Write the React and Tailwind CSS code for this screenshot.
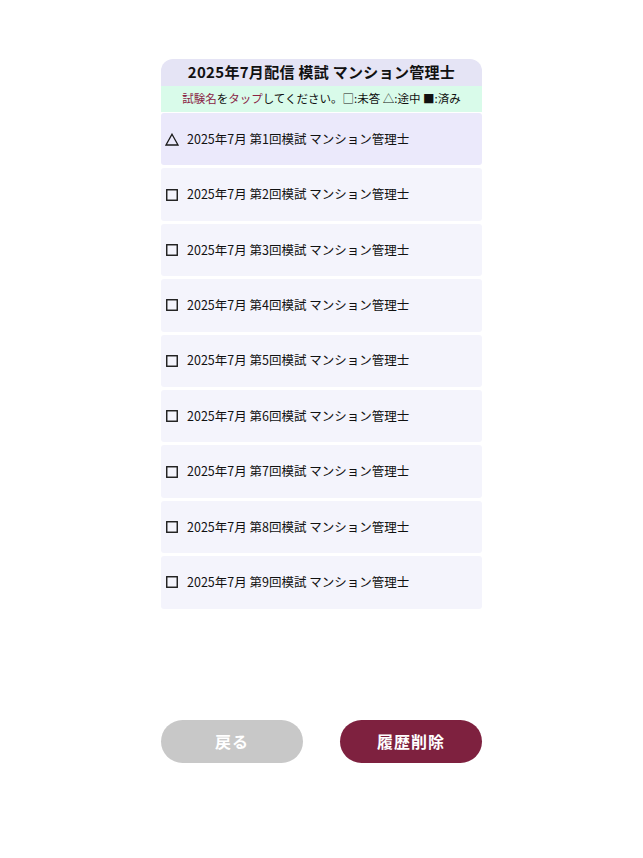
import React from 'react';

const EXAMS = [1, 2, 3, 4, 5, 6, 7, 8, 9].map((n) => ({
  id: n,
  title: `2025年7月 第${n}回模試 マンション管理士`,
  status: n === 1 ? 'progress' : 'none',
}));

function StatusIcon({ status }) {
  if (status === 'progress') {
    return (
      <svg width="14" height="13" viewBox="0 0 14 13" aria-hidden="true">
        <path d="M7 1.2 L13 12 L1 12 Z" fill="none" stroke="#1a1a1a" strokeWidth="1.3" strokeLinejoin="miter" />
      </svg>
    );
  }
  if (status === 'done') {
    return (
      <svg width="12" height="12" viewBox="0 0 12 12" aria-hidden="true">
        <rect x="0.5" y="0.5" width="11" height="11" fill="#1a1a1a" />
      </svg>
    );
  }
  return (
    <svg width="12" height="12" viewBox="0 0 12 12" aria-hidden="true">
      <rect x="0.75" y="0.75" width="10.5" height="10.5" fill="none" stroke="#1a1a1a" strokeWidth="1.4" />
    </svg>
  );
}

export default function App() {
  return (
    <div
      className="flex min-h-[858px] flex-col items-center bg-white text-[#111]"
      style={{ fontFamily: '"Noto Sans CJK JP", "Noto Sans", sans-serif' }}
    >
      <div className="mt-[59px] w-[321px]">
        <div className="flex h-[27px] items-center justify-center rounded-t-[12px] bg-[#e5e4f5] text-[15px] font-bold tracking-[0.3px]">
          2025年7月配信 模試 マンション管理士
        </div>
        <div className="flex h-[26px] items-center justify-center bg-[#d9fbea] text-[11.5px]">
          <span className="text-[#8a2445]">試験名</span>を<span className="text-[#8a2445]">タップ</span>してください。□:未答 △:途中 ■:済み
        </div>

        <div className="mt-[1px] flex flex-col gap-[3px]">
          {EXAMS.map((exam) => (
            <div
              key={exam.id}
              className={[
                'flex h-[52.4px] items-center rounded-[3px] pl-[4px] text-[12.5px]',
                exam.status === 'progress' ? 'bg-[#ebe9fb]' : 'bg-[#f4f4fc]',
              ].join(' ')}
            >
              <span className="flex w-[14px] justify-center">
                <StatusIcon status={exam.status} />
              </span>
              <span className="ml-[8px]">{exam.title}</span>
            </div>
          ))}
        </div>
      </div>

      <div className="mt-[111px] flex w-[321px] justify-between">
        <button className="h-[43px] w-[142px] rounded-full bg-[#c8c8c8] text-[16px] font-bold tracking-[1px] text-white">
          戻る
        </button>
        <button className="h-[43px] w-[142px] rounded-full bg-[#7e213f] text-[16px] font-bold tracking-[1px] text-white">
          履歴削除
        </button>
      </div>
    </div>
  );
}
